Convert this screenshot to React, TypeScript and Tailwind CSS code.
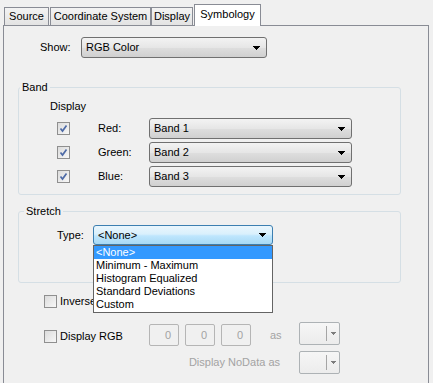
import { clsx } from "clsx";

const items = ["<None>", "Minimum - Maximum", "Histogram Equalized", "Standard Deviations", "Custom"];

function Arrow({ color = "#000000" }: { color?: string }) {
  return (
    <svg width="7" height="4" viewBox="0 0 7 4" shapeRendering="crispEdges">
      <path d="M0 0h7v1h-1v1h-1v1h-1v1h-1v-1h-1v-1h-1v-1h-1z" fill={color} />
    </svg>
  );
}

function Combo({
  value,
  className,
  focused,
}: {
  value: string;
  className?: string;
  focused?: boolean;
}) {
  return (
    <div
      className={clsx(
        "flex items-center justify-between rounded-[3px] border pl-[4px] pr-[6px] text-black",
        focused
          ? "border-[#3c7fb1] bg-[linear-gradient(#eaf6fd,#d9f0fc_45%,#bee6fd_55%,#a7d9f5)]"
          : "border-[#707070] bg-[linear-gradient(#f3f3f3,#e6e6e6_50%,#dddddd_55%,#d0d0d0)]",
        className,
      )}
    >
      <span>{value}</span>
      <Arrow />
    </div>
  );
}

function SmallCombo() {
  return (
    <div className="flex h-[23px] w-[41px] items-center rounded-[2px] border border-[#adb2b5] bg-[linear-gradient(#f6f6f6,#ececec)]">
      <div className="ml-auto h-[15px] w-px bg-[#a5a5a5]" />
      <div className="flex w-[12px] justify-center">
        <svg width="5" height="3" viewBox="0 0 5 3" shapeRendering="crispEdges">
          <path d="M0 0h5v1h-1v1h-1v1h-1v-1h-1v-1h-1z" fill="#7d7d7d" />
        </svg>
      </div>
    </div>
  );
}

function Check({ checked }: { checked?: boolean }) {
  return (
    <div className="flex h-[13px] w-[13px] shrink-0 items-center justify-center border border-[#8f8f8f] bg-[linear-gradient(135deg,#dcdcdc,#f7f7f7)]">
      {checked && (
        <svg width="11" height="11" viewBox="0 0 11 11">
          <path d="M2.5 5.5 L4.5 8 L8.5 2.5" fill="none" stroke="#4d6aa6" strokeWidth="1.7" />
        </svg>
      )}
    </div>
  );
}

function NumBox() {
  return (
    <div className="flex h-[22px] w-[30px] items-center justify-end rounded-[2px] border border-[#b5b5b5] pr-[7px] text-[#a3a3a3]">
      0
    </div>
  );
}

const bands = [
  ["Red:", "Band 1"],
  ["Green:", "Band 2"],
  ["Blue:", "Band 3"],
];

export default function App() {
  return (
    <div className="h-[383px] w-[433px] overflow-hidden bg-[#f0f0f0] font-['Liberation_Sans',Arial,sans-serif] text-[11px] leading-[13px] text-black">
      {/* tabs */}
      <div className="flex h-[25px] items-end pl-[4px]">
        <div className="flex h-[18px] w-[45px] items-center justify-center border border-b-0 border-[#898c95] bg-[linear-gradient(#f3f3f3,#e3e3e3)]">
          Source
        </div>
        <div className="ml-[1px] flex h-[18px] w-[101px] items-center justify-center border border-b-0 border-[#898c95] bg-[linear-gradient(#f3f3f3,#e3e3e3)]">
          Coordinate System
        </div>
        <div className="flex h-[18px] w-[42px] items-center justify-center border border-b-0 border-[#898c95] bg-[linear-gradient(#f3f3f3,#e3e3e3)]">
          Display
        </div>
        <div className="relative z-10 -mb-[1px] ml-[1px] flex h-[22px] w-[67px] items-center justify-center border border-b-0 border-[#898c95] bg-white pb-[2px]">
          Symbology
        </div>
      </div>

      {/* page */}
      <div className="ml-[3px] mr-[4px] h-[380px] border border-[#898c95] bg-[#f0f0f0]">
        <div className="ml-[36px] mt-[11px] flex items-center">
          <span className="w-[41px]">Show:</span>
          <Combo value="RGB Color" className="h-[21px] w-[186px]" />
        </div>

        <fieldset className="ml-[14px] mt-[23px] w-[383px] rounded-[3px] border border-[#d5dfe5] pb-[7px]">
          <legend className="ml-[1px] px-[2px]">Band</legend>
          <div className="pl-[31px] pt-[6px]">Display</div>
          <div className="mt-[5px] flex flex-col gap-[3px]">
            {bands.map(([label, band]) => (
              <div key={label} className="flex h-[21px] items-center pl-[38px]">
                <Check checked />
                <span className="ml-[28px] w-[51px]">{label}</span>
                <Combo value={band} className="h-[21px] w-[203px]" />
              </div>
            ))}
          </div>
        </fieldset>

        <fieldset className="ml-[14px] mt-[10px] w-[383px] rounded-[3px] border border-[#d5dfe5] pb-[37px]">
          <legend className="ml-[5px] px-[2px]">Stretch</legend>
          <div className="flex items-center pl-[38px] pt-[7px]">
            <span className="w-[36px]">Type:</span>
            <div className="relative z-20">
              <Combo value="<None>" focused className="h-[20px] w-[180px]" />
              <div className="absolute left-0 top-full w-[180px] border border-[#646464] bg-white pb-[1px]">
                {items.map((it, i) => (
                  <div
                    key={it}
                    className={clsx(
                      "h-[13px] pl-[2px]",
                      i === 0 ? "bg-[#3399ff] text-white" : "text-black",
                    )}
                  >
                    {it}
                  </div>
                ))}
              </div>
            </div>
          </div>
        </fieldset>

        <div className="ml-[40px] mt-[12px] flex items-center gap-[3px]">
          <Check />
          <span>Inverse</span>
        </div>

        <div className="ml-[40px] mt-[14px] flex items-start">
          <div className="mt-[8px]">
            <Check />
          </div>
          <span className="ml-[3px] mt-[8px] w-[89px]">Display RGB</span>
          <div className="mt-[2px] flex gap-[6px]">
            <NumBox />
            <NumBox />
            <NumBox />
          </div>
          <span className="ml-[19px] mt-[7px] w-[29px] text-[#a3a3a3]">as</span>
          <SmallCombo />
        </div>

        <div className="ml-[145px] mt-[5px] flex items-center">
          <span className="w-[131px] text-right text-[#a3a3a3]">Display NoData as</span>
          <div className="ml-[19px]">
            <SmallCombo />
          </div>
        </div>
      </div>
    </div>
  );
}
